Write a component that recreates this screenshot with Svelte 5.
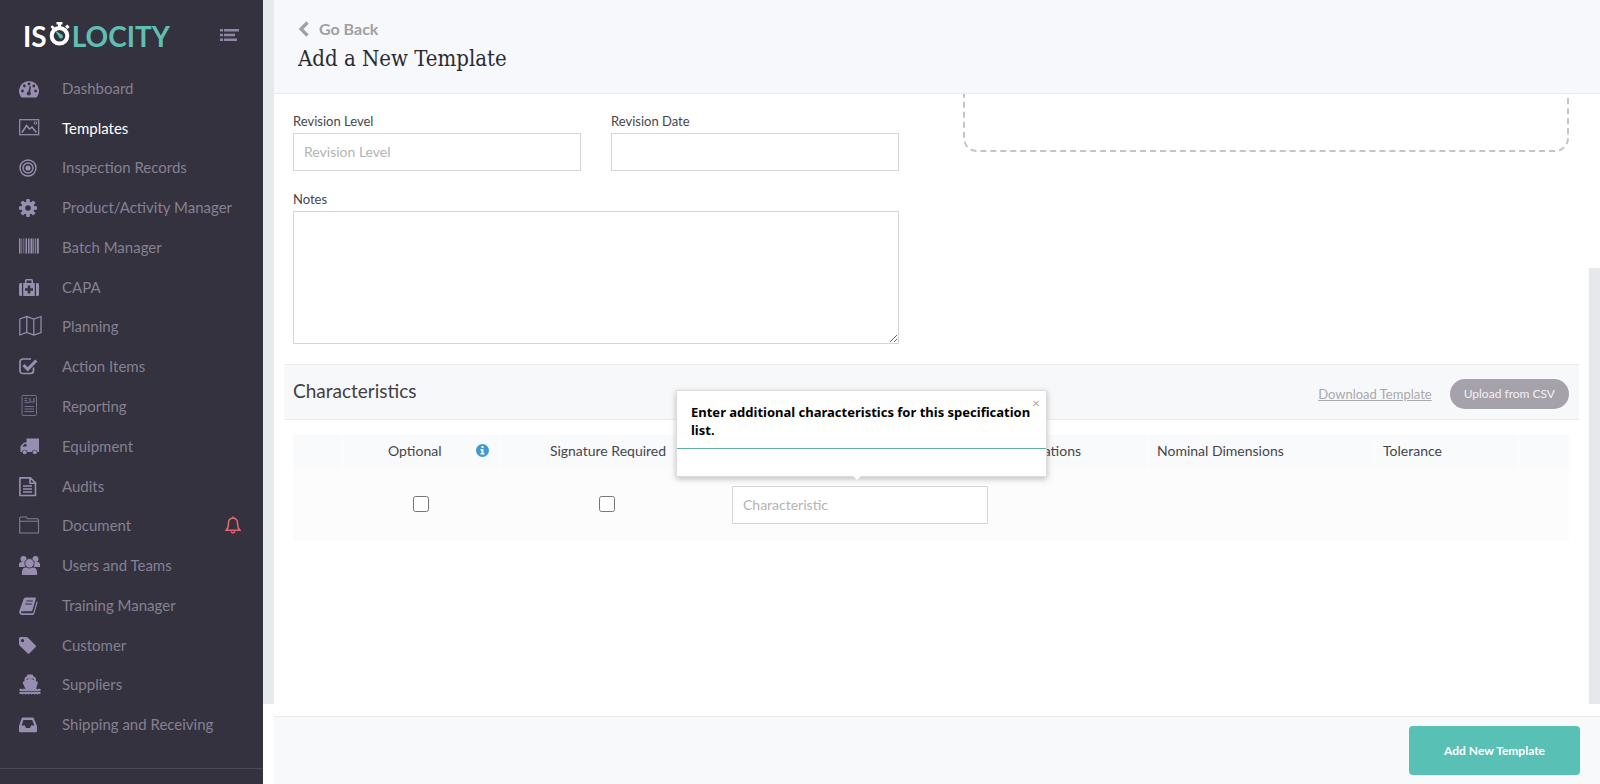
<script lang="ts">
  // 24x24 line and solid icons, drawn from the left edge of the box
  const icons: Record<string, string> = {
    dashboard:
      '<path fill="currentColor" d="M2 21a10 10 0 1 1 16 0q-.5.5-1 .5H3q-.5 0-1-.5z"/><g fill="#34323e"><circle cx="10" cy="8" r="1.4"/><circle cx="5.400" cy="10" r="1.400"/><circle cx="14.800" cy="10" r="1.400"/><circle cx="3.500" cy="15" r="1.400"/><circle cx="16.600" cy="15" r="1.400"/><circle cx="9.800" cy="17.500" r="2"/><path d="M9 17l1.700-7 1.200.3L11 18z"/></g>',
    image:
      '<rect x=".7" y="3.700" width="19" height="15" fill="none" stroke="currentColor" stroke-width="1.200"/><path d="M3 16.500l4.500-7 3 3.500 2.500-2 4.500 5.500" fill="none" stroke="currentColor" stroke-width="1.500"/><circle cx="16.500" cy="7" r="1.300" fill="none" stroke="currentColor"/>',
    target:
      '<g fill="none" stroke="currentColor" stroke-width="1.400"><circle cx="9" cy="13" r="8"/><circle cx="9" cy="13" r="5"/></g><circle cx="9" cy="13" r="2.600" fill="currentColor"/>',
    gear:
      '<g fill="currentColor"><circle cx="9" cy="13" r="6.500"/><rect x="7.200" y="4" width="3.600" height="18" rx=".8"/><rect x="7.200" y="4" width="3.600" height="18" rx=".8" transform="rotate(45 9 13)"/><rect x="7.200" y="4" width="3.600" height="18" rx=".8" transform="rotate(90 9 13)"/><rect x="7.200" y="4" width="3.600" height="18" rx=".8" transform="rotate(135 9 13)"/></g><circle cx="9" cy="13" r="2.800" fill="#34323e"/>',
    barcode:
      '<path fill="currentColor" d="M0 3.500h1.500v15H0zM2.500 3.500h.7v15h-.7zM4.500 3.500h.7v15h-.7zM6.500 3.500h1.500v15H6.500zM9 3.500h1.500v15H9zM11.500 3.500h2v15h-2zM14.300 3.500h.9v15h-.9zM16 3.500h.8v15H16zM17.800 3.500h2v15h-2z"/>',
    medkit:
      '<path fill="currentColor" d="M1.500 8H3v13H1.500Q0 21 0 19.500v-10Q0 8 1.500 8zM18.500 8H17v13h1.500q1.500 0 1.500-1.500v-10Q20 8 18.500 8zM4.200 8H6V5.500Q6 4 7.500 4h5Q14 4 14 5.500V8h1.800v13H4.200zM7.500 5.500V8h5V5.500z" fill-rule="evenodd"/><path d="M8.700 10.500h2.600v2.700H14v2.600h-2.700v2.700H8.700v-2.700H6v-2.600h2.700z" fill="#34323e"/>',
    map:
      '<path d="M.8 5l7-2.500 7 2.500 7.200-2.500v16L14.800 21l-7-2.500-7 2.500zM7.800 2.500v16M14.800 5v16" fill="none" stroke="currentColor" stroke-width="1.200"/>',
    check:
      '<path d="M14.500 13.500v3q0 3-3 3H4q-3 0-3-3V8q0-3 3-3h8" fill="none" stroke="currentColor" stroke-width="1.700"/><path d="M4.500 11l4.200 4.300L17.300 6.500" fill="none" stroke="currentColor" stroke-width="3.200"/>',
    report:
      '<g fill="none" stroke="currentColor" opacity=".65"><rect x="3" y="1.500" width="14.500" height="20" rx="1"/><path d="M5.500 4.500h3M5.500 6.500h3M5.500 8.500h5M11 4v4h4V4M5.500 12.500h9.500M5.500 15h9.500M5.500 17.500h9.500" stroke-width="1.200"/></g>',
    truck:
      '<path fill="currentColor" fill-rule="evenodd" d="M7.500 4.500H20V18h-1.500a2.800 2.800 0 0 0-5.500 0H8.500A2.800 2.800 0 0 0 3 18H1.500v-6L5 8.500h2.500zM3.200 12.500h4.300V10H5.600z"/><circle cx="5.700" cy="18.300" r="2" fill="currentColor"/><circle cx="15.800" cy="18.300" r="2" fill="currentColor"/>',
    file:
      '<path d="M.9 3.900h10.600l5 5v12.600H.9zM11 3.900v5.300h5.500M4 12h9M4 15h9M4 18h9" fill="none" stroke="currentColor" stroke-width="1.600" stroke-linejoin="round"/>',
    folder:
      '<path d="M.7 20V5.500q0-1.500 1.500-1.500h5l1.500 1.800h9.500q1.300 0 1.300 1.300V20zM.7 8.300h18.800" fill="none" stroke="currentColor" stroke-width="1.100" opacity=".8"/>',
    users:
      '<g fill="currentColor"><circle cx="4.500" cy="6" r="3"/><circle cx="16.500" cy="6" r="3"/><path d="M0 14v-2.500Q0 9 2.500 9H6v5zM21 14v-2.500Q21 9 18.500 9H15v5z"/><path d="M3.500 22Q2.500 22 3 18.500q.4-4 4-4h7q3.600 0 4 4 .5 3.500-.5 3.500z"/></g><circle cx="10.500" cy="10.300" r="4.700" fill="currentColor" stroke="#34323e" stroke-width=".8"/>',
    book:
      '<path fill="currentColor" d="M6.500 4.500h9.500q1.200 0 .8 1.400L13.500 17q-.4 1.200-1.600 1.200H3q-.9 0-.9 1t1.100 1h10q1 0 1.300-1l3.200-11q1.200.6.8 1.900l-3.200 10.300q-.5 1.500-2 1.500H2.800Q-.3 21.500.3 18.200L4.500 6.300Q5 4.500 6.500 4.500z"/><path d="M7.300 8h6.500M6.300 11h6.500" stroke="#34323e" stroke-width="1.200"/>',
    tag:
      '<path fill="currentColor" fill-rule="evenodd" d="M0 5.500Q0 4 1.500 4H7q1.200 0 2 .8l7.500 7.500q1 1 0 2l-6 6q-1 1-2 0L.8 12.700Q0 12 0 10.700zM3.500 6a1.600 1.600 0 1 0 .1 0z"/>',
    ship:
      '<path fill="currentColor" d="M9 2.500h4q1 0 1.300 1.500l1 1q1.700 0 1.700 1.700V9l2 1.200L17 17H6.500L3.500 10.200 5.500 9V6.700Q5.500 5 7 5l.8-1q.2-1.500 1.200-1.500zM7.500 6.800v1L11 6.700l4 1.100v-1z" fill-rule="evenodd"/><path d="M.5 18.500l1.500-.8 1.500.8 1.500-.8 1.500.8 1.500-.8 1.500.8 1.500-.8 1.500.8 1.500-.8 1.500.8 1.500-.8 1.500.8 1.500-.8 1.500.8M.5 21.500l1.500-.8 1.500.8 1.500-.8 1.500.8 1.500-.8 1.500.8 1.500-.8 1.500.8 1.500-.8 1.500.8 1.500-.8 1.500.8 1.500-.8 1.500.8" fill="none" stroke="currentColor" stroke-width="1.900"/>',
    inbox:
      '<path fill="currentColor" fill-rule="evenodd" d="M4 5.500h9.500q1 0 1.400 1L18 14v5q0 1.200-1.200 1.200H1.200Q0 20.200 0 19v-5l2.600-7.500q.4-1 1.400-1zM4.400 8L2.600 13.500H6l1 2.500h4l1-2.500h3.300L13.200 8z"/>'
  };

  const menu = [
    { label: 'Dashboard', icon: 'dashboard' },
    { label: 'Templates', icon: 'image', active: true },
    { label: 'Inspection Records', icon: 'target' },
    { label: 'Product/Activity Manager', icon: 'gear' },
    { label: 'Batch Manager', icon: 'barcode' },
    { label: 'CAPA', icon: 'medkit' },
    { label: 'Planning', icon: 'map' },
    { label: 'Action Items', icon: 'check' },
    { label: 'Reporting', icon: 'report' },
    { label: 'Equipment', icon: 'truck' },
    { label: 'Audits', icon: 'file' },
    { label: 'Document', icon: 'folder', alert: true },
    { label: 'Users and Teams', icon: 'users' },
    { label: 'Training Manager', icon: 'book' },
    { label: 'Customer', icon: 'tag' },
    { label: 'Suppliers', icon: 'ship' },
    { label: 'Shipping and Receiving', icon: 'inbox' }
  ];

  let showTip = $state(true);
</script>

<div class="app">
  <aside class="sidebar">
    <div class="brand">
      <a class="logo" href="#home" aria-label="Isolocity">
        <span class="iso">IS</span>
        <svg width="22" height="24" viewBox="0 0 22 24">
          <path d="M7.500 0h6v2.500h-1.500V5H9V2.500H7.500zM16 4.500l2.300-2 2.300 2.500-2.100 2zM1.500 5l1.700-1.800L6 5.500 4 7.500z" fill="#fff" />
          <circle cx="10.500" cy="13.800" r="7.800" fill="none" stroke="#fff" stroke-width="4" />
          <path d="M6 8.500l7.500 4.500q1 2-.5 3.500-2 .5-3-1.500z" fill="#5fbfb3" />
        </svg>
        <span class="locity">LOCITY</span>
      </a>
      <button class="toggle" aria-label="Toggle menu">
        <svg width="20" height="14" viewBox="0 0 20 14" fill="#8f86a6">
          <path d="M0 1h3v2.500H0zM4 1h15v2.500H4zM0 5.700h3v2.500H0zM4 5.700h11v2.500H4zM0 10.500h3V13H0zM4 10.500h13V13H4z" />
        </svg>
      </button>
    </div>
    <nav>
      {#each menu as item}
        <a href="#{item.icon}" class:active={item.active}>
          <svg class="icon" width="24" height="24" viewBox="0 0 24 24">{@html icons[item.icon]}</svg>
          <span>{item.label}</span>
          {#if item.alert}
            <svg class="bell" width="16" height="18" viewBox="0 0 16 18" fill="none" stroke="#e0666b" stroke-width="1.600">
              <path d="M1.200 14.200Q3.500 12 3.500 7q0-4.500 4.500-5 4.500.5 4.500 5 0 5 2.300 7.200zM8 .5V2" />
              <path d="M6 15.500q2 2.500 4 0" />
            </svg>
          {/if}
        </a>
      {/each}
    </nav>
    <div class="sidebar-foot"></div>
  </aside>

  <div class="gutter"></div>

  <div class="main">
    <header>
      <a class="back" href="#back">
        <svg width="11" height="16" viewBox="0 0 11 16" fill="none" stroke="#a0a0a2" stroke-width="3.200">
          <path d="M9.500 1.500L3 8l6.500 6.500" />
        </svg>
        Go Back
      </a>
      <h1>Add a New Template</h1>
    </header>

    <div class="body">
      <div class="content">
        <div class="form">
          <div class="fields">
            <div class="field">
              <label for="rev-level">Revision Level</label>
              <input id="rev-level" type="text" placeholder="Revision Level" />
            </div>
            <div class="field">
              <label for="rev-date">Revision Date</label>
              <input id="rev-date" type="text" />
            </div>
            <div class="field wide">
              <label for="notes">Notes</label>
              <textarea id="notes"></textarea>
            </div>
          </div>
          <div class="dropzone"></div>
        </div>

        <section class="band">
          <h2>Characteristics</h2>
          <a class="download" href="#download">Download Template</a>
          <button class="upload">Upload from CSV</button>
        </section>

        <table>
          <colgroup>
            <col class="c-edge" />
            <col class="c-optional" />
            <col class="c-signature" />
            <col class="c-name" />
            <col class="c-spec" />
            <col class="c-nominal" />
            <col class="c-tolerance" />
            <col class="c-edge" />
          </colgroup>
          <thead>
            <tr>
              <th></th>
              <th>
                <div class="with-info">
                  <span>Optional</span>
                  <svg width="13" height="13" viewBox="0 0 13 13">
                    <circle cx="6.500" cy="6.500" r="6.500" fill="#4397d1" />
                    <path d="M5.500 2h2v2h-2zM4.500 5h3v4h1v1.500h-4V9h1V6.500h-1z" fill="#fff" />
                  </svg>
                </div>
              </th>
              <th>Signature Required</th>
              <th class="spec" colspan="2">Specifications</th>
              <th class="left">Nominal Dimensions</th>
              <th class="left">Tolerance</th>
              <th></th>
            </tr>
          </thead>
          <tbody>
            <tr>
              <td></td>
              <td><input type="checkbox" aria-label="Optional" /></td>
              <td><input type="checkbox" aria-label="Signature Required" /></td>
              <td>
                <div class="anchor">
                  <input type="text" placeholder="Characteristic" aria-label="Characteristic" />
                  {#if showTip}
                    <div class="tip">
                      <p>Enter additional characteristics for this specification list.</p>
                      <button class="close" aria-label="Close" onclick={() => (showTip = false)}>×</button>
                    </div>
                  {/if}
                </div>
              </td>
              <td></td>
              <td></td>
              <td></td>
              <td></td>
            </tr>
          </tbody>
        </table>
      </div>
      <div class="scrollbar"></div>
    </div>

    <footer>
      <button class="submit">Add New Template</button>
    </footer>
  </div>
</div>

<style>
  :global(body) {
    margin: 0;
    font-family: Lato, 'Open Sans', sans-serif;
    color: #46464a;
  }

  .app {
    display: flex;
    height: 100vh;
    overflow: hidden;
    background: #fff;
  }

  * {
    box-sizing: border-box;
  }

  button {
    border: 0;
    padding: 0;
    background: none;
    font-family: inherit;
    cursor: pointer;
  }

  /* sidebar */
  .sidebar {
    display: flex;
    flex-direction: column;
    flex: none;
    width: 263px;
    background: #34323e;
  }

  .brand {
    display: flex;
    align-items: center;
    justify-content: space-between;
    height: 68px;
    padding: 4px 23px 0 23px;
  }

  .logo {
    display: flex;
    align-items: center;
    font-size: 28px;
    line-height: 32px;
    font-weight: bold;
    text-decoration: none;
  }

  .logo svg {
    margin: 0 1px 4px 2px;
  }

  .iso {
    color: #fff;
  }

  .locity {
    color: #5fbfb3;
  }

  nav {
    display: flex;
    flex: 1;
    flex-direction: column;
  }

  nav a {
    display: flex;
    flex: 1;
    align-items: center;
    gap: 19px;
    padding: 0 22px 0 19px;
    color: #858093;
    font-size: 15px;
    line-height: 20px;
    text-decoration: none;
  }

  nav a.active {
    color: #fff;
  }

  .icon {
    color: #988fb0;
  }

  .bell {
    margin-left: auto;
  }

  .sidebar-foot {
    height: 16px;
    margin-top: 24px;
    border-top: 1px solid #4b4956;
  }

  .gutter {
    flex: none;
    width: 11px;
    margin-bottom: 80px;
    background: #e7eaed;
  }

  /* page */
  .main {
    display: flex;
    flex: 1;
    flex-direction: column;
    min-width: 0;
  }

  header {
    height: 94px;
    padding: 19px 24px 0;
    background: #f7f8fb;
    border-bottom: 1px solid #e8ebef;
  }

  .back {
    display: flex;
    align-items: center;
    gap: 10px;
    color: #a0a0a2;
    font-size: 16px;
    line-height: 20px;
    font-weight: bold;
    text-decoration: none;
  }

  h1 {
    margin: 4px 0 0;
    color: #2b2b2d;
    font: 22px/32px 'DejaVu Serif Condensed', 'DejaVu Serif', serif;
  }

  .body {
    display: flex;
    flex: 1;
    min-height: 0;
    overflow: hidden;
  }

  .content {
    flex: 1;
    min-width: 0;
    padding: 0 10px;
  }

  .scrollbar {
    flex: none;
    width: 11px;
    margin: 174px 0 12px;
    background: #e7e8ec;
  }

  .form {
    display: grid;
    grid-template-columns: 1fr 1fr;
    gap: 64px;
    padding: 0 10px 0 9px;
  }

  .fields {
    display: grid;
    grid-template-columns: 1fr 1fr;
    gap: 19px 30px;
    padding-top: 18px;
  }

  .field {
    display: flex;
    flex-direction: column;
    gap: 3px;
  }

  .wide {
    grid-column: span 2;
  }

  label {
    font-size: 13px;
    line-height: 18px;
  }

  input[type='text'],
  textarea {
    width: 100%;
    height: 38px;
    margin: 0;
    padding: 0 10px 2px;
    border: 1px solid #d6d6d8;
    border-radius: 0;
    background: #fff;
    font-family: inherit;
    font-size: 14px;
  }

  textarea {
    display: block;
    height: 133px;
  }

  ::placeholder {
    color: #b3b3b5;
  }

  .dropzone {
    height: 88px;
    margin-top: -30px;
    border: 2px dashed #c4c4c6;
    border-radius: 14px;
  }

  .band {
    display: flex;
    align-items: center;
    height: 56px;
    margin-top: 20px;
    padding: 3px 10px 0 9px;
    background: #f7f8fa;
    border: solid #eaecee;
    border-width: 1px 0;
  }

  h2 {
    margin: 0 auto 0 0;
    padding-bottom: 6px;
    color: #3f3f43;
    font-size: 19px;
    line-height: 24px;
    font-weight: normal;
  }

  .download {
    margin-right: 18px;
    color: #a9a9ad;
    font-size: 13px;
  }

  .upload {
    height: 30px;
    padding: 0 14px;
    border-radius: 15px;
    background: #a5a2ac;
    color: #f2f1f4;
    font-size: 12px;
  }

  table {
    width: calc(100% - 19px);
    margin: 15px 10px 0 9px;
    border-collapse: collapse;
    table-layout: fixed;
  }

  .c-edge {
    width: 50px;
  }

  .c-optional {
    width: 157px;
  }

  .c-signature {
    width: 216px;
  }

  .c-name {
    width: 288px;
  }

  .c-spec {
    width: 144px;
  }

  .c-nominal {
    width: 226px;
  }

  .c-tolerance {
    width: 145px;
  }

  th {
    height: 34px;
    padding: 0 0 3px;
    background: #f8fafb;
    border-right: 2px solid #fbfcfd;
    font-size: 14px;
    line-height: 18px;
    font-weight: normal;
    white-space: nowrap;
  }

  th.left {
    padding-left: 8px;
    text-align: left;
  }

  th.spec {
    padding-right: 66px;
    text-align: right;
  }

  .with-info {
    display: flex;
    align-items: center;
    padding: 0 10px 0 44px;
  }

  .with-info svg {
    margin-left: auto;
  }

  td {
    height: 72px;
    padding: 0 16px;
    background: #fcfcfc;
    text-align: center;
  }

  input[type='checkbox'] {
    width: 16px;
    height: 16px;
    margin: 0 2px 4px 0;
    vertical-align: middle;
  }

  .anchor {
    position: relative;
  }

  .tip {
    position: absolute;
    bottom: calc(100% + 9px);
    left: -56px;
    width: 371px;
    padding-bottom: 27px;
    background: #fff;
    border: 1px solid #dcdcdc;
    box-shadow: 0 2px 6px rgba(0, 0, 0, 0.25);
    text-align: left;
  }

  .tip::after {
    position: absolute;
    top: 100%;
    left: 176px;
    border: solid transparent;
    border-width: 4px 4px 0;
    border-top-color: #fff;
    content: '';
  }

  .tip p {
    margin: 0;
    padding: 12px 8px 9px 14px;
    border-bottom: 1px solid #5fb0a6;
    color: #000;
    font: bold 13px/18px 'Noto Sans', 'Open Sans', sans-serif;
  }

  .close {
    position: absolute;
    top: 4px;
    right: 6px;
    color: #aaa;
    font-size: 14px;
    line-height: 16px;
  }

  footer {
    display: flex;
    align-items: center;
    justify-content: flex-end;
    height: 68px;
    padding: 0 20px;
    background: #f7f9fa;
    border-top: 1px solid #e8ebed;
  }

  .submit {
    height: 49px;
    padding: 0 35px;
    border-radius: 4px;
    background: #59c0b5;
    color: #fff;
    font-size: 12px;
    font-weight: bold;
  }
</style>
